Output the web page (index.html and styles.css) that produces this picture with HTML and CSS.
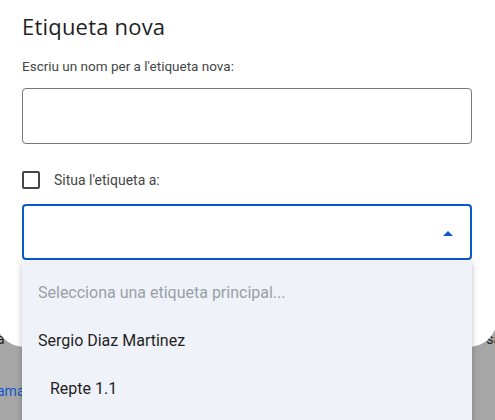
FILE: index.html
```html
<!DOCTYPE html>
<html lang="ca">
<head>
<meta charset="utf-8">
<link rel="stylesheet" href="styles.css">
</head>
<body>
<div class="page">
  <div class="bg-row"><span class="bg-left">a</span><span class="bg-right">sa</span></div>
  <div class="bg-row link-row"><span class="bg-link">ama</span></div>
</div>
<div class="dialog">
  <h1 class="title">Etiqueta nova</h1>
  <label class="field-label">Escriu un nom per a l'etiqueta nova:</label>
  <div class="text-input"></div>
  <div class="check-row">
    <span class="checkbox"></span>
    <span class="check-label">Situa l'etiqueta a:</span>
  </div>
  <div class="select">
    <svg class="caret" width="10" height="5" viewBox="0 0 10 5"><path d="M0 5 L5 0 L10 5 Z" fill="#0b57d0"/></svg>
  </div>
</div>
<div class="menu">
  <div class="menu-item placeholder">Selecciona una etiqueta principal...</div>
  <div class="menu-item">Sergio Diaz Martinez</div>
  <div class="menu-item nested">Repte 1.1</div>
</div>
</body>
</html>
```
FILE: styles.css
```css
html, body {
  margin: 0;
  padding: 0;
}
body {
  width: 495px;
  height: 420px;
  overflow: hidden;
  background: #a6a6a6;
  font-family: Roboto, "Liberation Sans", sans-serif;
  position: relative;
}
.page {
  padding-top: 331px;
  display: flex;
  flex-direction: column;
  gap: 36px;
}
.bg-row {
  display: flex;
  justify-content: space-between;
  font-size: 14px;
  color: #1f1f1f;
  margin-left: -3px;
  margin-right: -6px;
}
.bg-link {
  color: #0b57d0;
}
.dialog {
  position: absolute;
  left: -4px;
  top: -22px;
  width: 501px;
  height: 369px;
  background: #fff;
  border-radius: 28px;
  box-sizing: border-box;
  padding: 34px 25px 0 26px;
}
.title {
  margin: 0;
  font-family: "Open Sans", Roboto, sans-serif;
  font-weight: 400;
  font-size: 22px;
  line-height: 28px;
  color: #1f1f1f;
  letter-spacing: 0.2px;
}
.field-label {
  display: block;
  margin-top: 16px;
  font-size: 13.5px;
  line-height: 20px;
  color: #444746;
}
.text-input {
  margin-top: 12px;
  height: 56px;
  border: 1px solid #747775;
  border-radius: 4px;
  box-sizing: border-box;
}
.check-row {
  margin-top: 27px;
  display: flex;
  align-items: center;
  gap: 14px;
  height: 18px;
}
.checkbox {
  width: 18px;
  height: 18px;
  box-sizing: border-box;
  border: 2px solid #444746;
  border-radius: 2px;
}
.check-label {
  font-size: 14px;
  color: #444746;
}
.select {
  margin-top: 15px;
  height: 56px;
  border: 2px solid #0b57d0;
  border-radius: 4px;
  box-sizing: border-box;
  display: flex;
  align-items: center;
  justify-content: flex-end;
  padding-right: 17px;
}
.caret {
  display: block;
  margin-top: 2px;
}
.menu {
  position: absolute;
  left: 22px;
  top: 260px;
  width: 450px;
  height: 180px;
  background: #eff2f8;
  border-radius: 4px;
  box-shadow: 0 2px 6px rgba(0,0,0,0.25);
  padding-top: 8px;
  box-sizing: border-box;
}
.menu-item {
  height: 48px;
  display: flex;
  align-items: center;
  padding-left: 16px;
  font-size: 16px;
  color: #1f1f1f;
}
.menu-item.placeholder {
  color: #9aa0a6;
}
.menu-item.nested {
  padding-left: 28px;
}
```
